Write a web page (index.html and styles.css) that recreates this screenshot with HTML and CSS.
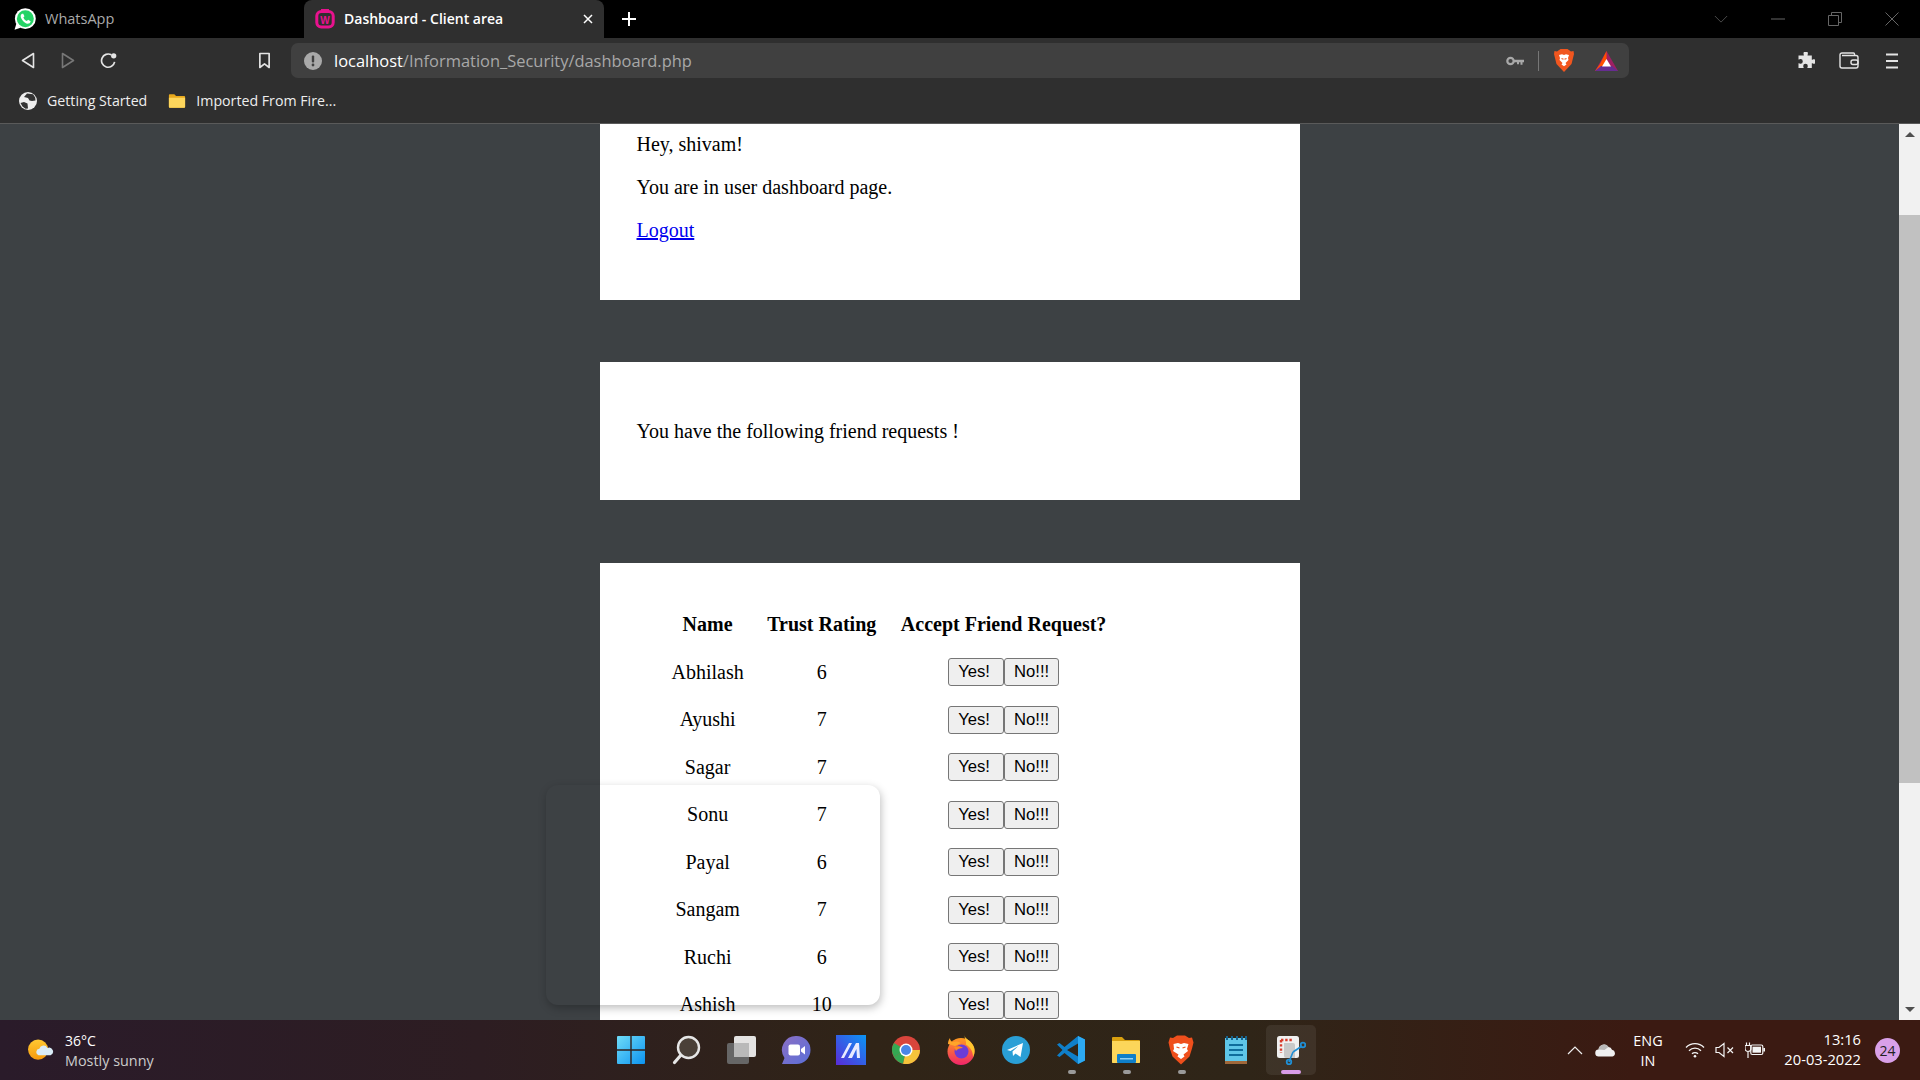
FILE: index.html
```html
<!DOCTYPE html>
<html>
<head>
    <meta charset="utf-8">
    <title>Dashboard - Client area</title>
    <link rel="stylesheet" href="styles.css">
</head>
<body>
<div class="browser">
    <div class="tabstrip">
        <div class="tab">
            <svg class="favicon favicon-wa" viewBox="0 0 20 20"><circle cx="10.300" cy="9.700" r="9.500" fill="#fff"/><path d="M.5 19.800l1.700-5.600 3.800 3.800z" fill="#fff"/><circle cx="10.300" cy="9.700" r="7.700" fill="#25d366"/><path d="M7.200 5.200c-1.500 1-1.600 3 0 5.200 1.600 2.300 3.700 4 5.800 3.800 1.300-.1 2.100-1.100 2.100-2.200l-2.300-1.300-1.100 1.100c-1.500-.5-2.700-1.800-3.200-3.200l1-1.100-1.100-2.300z" fill="#fff"/></svg>
            <span>WhatsApp</span>
        </div>
        <div class="tab tab-active">
            <svg class="favicon" viewBox="0 0 20 20"><rect x="1.800" y="2.500" width="16.400" height="15.500" rx="4.500" fill="none" stroke="#e8128e" stroke-width="3"/><rect x="6" y="0" width="8" height="4" fill="#e8128e"/><text x="10" y="14.500" text-anchor="middle" class="wamp-w">W</text></svg>
            <span>Dashboard - Client area</span>
            <svg class="tab-close" viewBox="0 0 12 12"><path d="M2 2l8 8M10 2l-8 8" stroke="#fff" stroke-width="1.500"/></svg>
        </div>
        <svg class="new-tab" viewBox="0 0 16 16"><path d="M8 1v14M1 8h14" stroke="#fff" stroke-width="2"/></svg>
        <div class="window-btns">
            <span><svg viewBox="0 0 16 10" width="14" height="9"><path d="M1 1l7 7 7-7" fill="none" stroke="#555"/></svg></span>
            <span><svg viewBox="0 0 14 2" width="14" height="2"><path d="M0 1h14" stroke="#666"/></svg></span>
            <span><svg viewBox="0 0 14 14" width="14" height="14"><path d="M.5 3.500h10v10h-10zM3.500 3.500v-3h10v10h-3" fill="none" stroke="#666"/></svg></span>
            <span><svg viewBox="0 0 14 14" width="14" height="14"><path d="M.5.5l13 13M13.500.5l-13 13" stroke="#666"/></svg></span>
        </div>
    </div>

    <div class="toolbar">
        <button class="tool"><svg viewBox="0 0 14 17" width="14" height="17"><path d="M12.500 1.500L1.500 8.500l11 7z" fill="none" stroke="#e4e4e4" stroke-width="1.600" stroke-linejoin="round"/></svg></button>
        <button class="tool"><svg viewBox="0 0 14 17" width="14" height="17"><path d="M1.500 1.500l11 7-11 7z" fill="none" stroke="#777" stroke-width="1.600" stroke-linejoin="round"/></svg></button>
        <button class="tool"><svg viewBox="0 0 18 18" width="17" height="17"><path d="M15.500 10.500A7 7 0 1 1 12 3" fill="none" stroke="#e4e4e4" stroke-width="1.800"/><circle cx="14.500" cy="4" r="2.800" fill="#e4e4e4"/></svg></button>
        <button class="tool tool-bookmark"><svg viewBox="0 0 14 18" width="13" height="17"><path d="M2 1.500h10v15l-5-3.800-5 3.800z" fill="none" stroke="#e4e4e4" stroke-width="1.800" stroke-linejoin="round"/></svg></button>
        <div class="address">
            <svg class="addr-info" viewBox="0 0 18 18"><circle cx="9" cy="9" r="9" fill="#a9a9a9"/><rect x="7.800" y="3.500" width="2.400" height="7" rx="1" fill="#404040"/><circle cx="9" cy="13" r="1.400" fill="#404040"/></svg>
            <span class="url"><b>localhost</b>/Information_Security/dashboard.php</span>
            <svg class="addr-key" viewBox="0 0 18 10"><circle cx="4.500" cy="5" r="3.200" fill="none" stroke="#a9a9a9" stroke-width="2.200"/><path d="M8 3.800h10v2.400h-1.500v2.500h-2V6.200h-1.500v2h-2V6.200H8z" fill="#a9a9a9"/></svg>
            <i class="addr-sep"></i>
            <svg class="addr-brave" viewBox="0 0 20 23"><path d="M3 2.500L6.500 0h7L17 2.500l2.500-.5.500 3-1 4-1.500 6-7.500 8-7.500-8L1 9 0 5l.5-3z" fill="#f1561f"/><path d="M5 6l3-.8 2 .8 2-.8L15 6l-1 3 .5 2-3 3 1 1.500-2.500 1.800-2.500-1.800 1-1.500-3-3L6 9z" fill="#fff"/><path d="M7.500 9.500l2 .8M12.500 9.500l-2 .8" stroke="#f1561f" stroke-width="1.200"/></svg>
            <svg class="addr-bat" viewBox="0 0 23 20"><path d="M11.500 0L23 20H0z" fill="#9e1f63"/><path d="M11.500 0L5 13l-5 7 11.500-7 z" fill="#ff5000"/><path d="M0 20l6-5h11l6 5z" fill="#662d91"/><path d="M11.500 8L16 15.500H7z" fill="#fff"/></svg>
        </div>
        <div class="tool-right">
            <button class="tool tool-wide"><svg viewBox="0 0 18 18" width="18" height="18"><path d="M6.500 1.500a2.200 2.200 0 0 1 4.400 0c0 .8-.4 1.200-.4 2.100h4.300v4.200c.9 0 1.400-.6 2-.6a2.300 2.300 0 0 1 0 4.600c-.6 0-1.100-.6-2-.6v4.800h-4.500c0-.9.500-1.400.5-2a2.300 2.300 0 0 0-4.600 0c0 .6.500 1.100.5 2H1.500v-4.800c.9 0 1.300.5 2 .5a2.300 2.300 0 0 0 0-4.600c-.7 0-1.100.5-2 .5V3.600h5.400c0-.9-.4-1.300-.4-2.100z" fill="#e4e4e4"/></svg></button>
            <button class="tool tool-wide"><svg viewBox="0 0 20 17" width="20" height="17"><path d="M15.500 3.500V2a1 1 0 0 0-1-1H3A2 2 0 0 0 1 3v11a2 2 0 0 0 2 2h14a2 2 0 0 0 2-2V5.500a2 2 0 0 0-2-2H3" fill="none" stroke="#e4e4e4" stroke-width="1.400"/><rect x="12" y="8" width="7" height="4.500" rx="2" fill="none" stroke="#e4e4e4" stroke-width="1.400"/></svg></button>
            <button class="tool tool-wide"><svg viewBox="0 0 12 16" width="12" height="16"><path d="M0 1.500h12M0 8h12M0 14.500h12" stroke="#e4e4e4" stroke-width="2"/></svg></button>
        </div>
    </div>

    <div class="bookmarks">
        <div class="bookmark">
            <svg class="bm-icon" viewBox="0 0 18 18"><circle cx="9" cy="9" r="9" fill="#eee"/><path d="M8 1.500l6 .8 2.200 3.200.3 3-3.500.5-2.500-.5-1.500-2.500L5 5zM1.500 11l3.500-1 3.500 1.500.5 5-2.500.3-3-2.300z" fill="#333"/></svg>
            <span>Getting Started</span>
        </div>
        <div class="bookmark">
            <svg class="bm-icon" viewBox="0 0 20 17"><path d="M1 2a1 1 0 0 1 1-1h5l2 2h9a1 1 0 0 1 1 1v11a1 1 0 0 1-1 1H2a1 1 0 0 1-1-1z" fill="#e8a91d"/><path d="M1 5h18v10a1 1 0 0 1-1 1H2a1 1 0 0 1-1-1z" fill="#fdd65c"/></svg>
            <span>Imported From Fire...</span>
        </div>
    </div>

    <div class="viewport">
        <main class="page">
            <section class="card card-intro">
                <p>Hey, shivam!</p>
                <p>You are in user dashboard page.</p>
                <p><a href="#">Logout</a></p>
            </section>

            <section class="card card-notice">
                <p>You have the following friend requests !</p>
            </section>

            <section class="card card-table">
                <table>
                    <tr><th>Name</th><th>Trust Rating</th><th>Accept Friend Request?</th></tr>
                    <tr><td>Abhilash</td><td>6</td><td><button>Yes!</button><button>No!!!</button></td></tr>
                    <tr><td>Ayushi</td><td>7</td><td><button>Yes!</button><button>No!!!</button></td></tr>
                    <tr><td>Sagar</td><td>7</td><td><button>Yes!</button><button>No!!!</button></td></tr>
                    <tr><td>Sonu</td><td>7</td><td><button>Yes!</button><button>No!!!</button></td></tr>
                    <tr><td>Payal</td><td>6</td><td><button>Yes!</button><button>No!!!</button></td></tr>
                    <tr><td>Sangam</td><td>7</td><td><button>Yes!</button><button>No!!!</button></td></tr>
                    <tr><td>Ruchi</td><td>6</td><td><button>Yes!</button><button>No!!!</button></td></tr>
                    <tr><td>Ashish</td><td>10</td><td><button>Yes!</button><button>No!!!</button></td></tr>
                </table>
            </section>
            <div class="ghost-panel"></div>
        </main>
        <div class="scrollbar">
            <div class="scroll-arrow"><i class="arrow-up"></i></div>
            <div class="scroll-track"><div class="scroll-thumb"></div></div>
            <div class="scroll-arrow"><i class="arrow-down"></i></div>
        </div>
    </div>

    <footer class="taskbar">
        <div class="weather">
            <svg class="weather-icon" viewBox="0 0 28 26"><defs><linearGradient id="sun" x1="0" y1="0" x2="0" y2="1"><stop offset="0" stop-color="#ffc933"/><stop offset="1" stop-color="#f59a0c"/></linearGradient></defs><circle cx="11.500" cy="12" r="10.500" fill="url(#sun)"/><path d="M12 18a3.500 3.500 0 0 1 .8-6.800 4.500 4.500 0 0 1 8.400-.8 4 4 0 0 1 3.300 7.600z" fill="#d9ecf7"/></svg>
            <div class="weather-text">
                <div class="temp">36°C</div>
                <div class="cond">Mostly sunny</div>
            </div>
        </div>

        <div class="apps">
            <div class="app"><svg viewBox="0 0 30 30"><defs><linearGradient id="win" x1="0" y1="0" x2="1" y2="1"><stop offset="0" stop-color="#6fdcf8"/><stop offset="1" stop-color="#0c93f0"/></linearGradient></defs><path d="M1 2a1 1 0 0 1 1-1h12.300v13.300H1zM15.700 1H28a1 1 0 0 1 1 1v12.300H15.700zM1 15.700h13.300V29H2a1 1 0 0 1-1-1zM15.700 15.700H29V28a1 1 0 0 1-1 1H15.700z" fill="url(#win)"/></svg></div>
            <div class="app"><svg viewBox="0 0 30 30"><circle cx="17.500" cy="12.500" r="10.500" fill="#4a4038" stroke="#e6e6e6" stroke-width="2.400"/><path d="M9.800 20.200L3.500 27.500" stroke="#e6e6e6" stroke-width="3.200" stroke-linecap="round"/></svg></div>
            <div class="app"><svg viewBox="0 0 30 30"><rect x="1" y="8" width="22" height="21" rx="2" fill="#666"/><rect x="8" y="1" width="22" height="21" rx="2" fill="#f2f2f2" opacity=".93"/><rect x="8" y="8" width="15" height="14" fill="#b9b9b9"/></svg></div>
            <div class="app"><svg viewBox="0 0 30 30"><defs><linearGradient id="chat" x1="0" y1="0" x2="1" y2="1"><stop offset="0" stop-color="#8b6fc4"/><stop offset="1" stop-color="#5a6fd8"/></linearGradient></defs><path d="M15.500 1a14 14 0 0 1 0 28H1l2.500-6A14 14 0 0 1 15.500 1z" fill="url(#chat)"/><rect x="7.500" y="9.500" width="11.500" height="11" rx="2" fill="#fff"/><path d="M20 14l4-3v8.500l-4-3z" fill="#fff"/></svg></div>
            <div class="app"><svg viewBox="0 0 30 30"><defs><linearGradient id="mm" x1="0" y1="1" x2="1" y2="0"><stop offset="0" stop-color="#5a2bd8"/><stop offset="1" stop-color="#0a96f5"/></linearGradient></defs><rect width="30" height="30" fill="url(#mm)"/><path d="M5 23L13 8h3L8 23zM12 23l8-15h3l1 15h-3l-.6-9-4.400 9z" fill="#e8eaff"/></svg></div>
            <div class="app"><svg viewBox="0 0 30 30"><circle cx="15" cy="15" r="14" fill="#d9453c"/><path d="M15 15L2.900 22A14 14 0 0 1 3 8z" fill="#34a853"/><path d="M15 15h14a14 14 0 0 1-17 13.700z" fill="#f5c33b"/><path d="M15 15L2.900 22A14 14 0 0 0 12 28.700z" fill="#34a853"/><circle cx="15" cy="15" r="6.500" fill="#fff"/><circle cx="15" cy="15" r="5" fill="#4a86e8"/></svg></div>
            <div class="app"><svg viewBox="0 0 30 30"><defs><linearGradient id="fox" x1="0" y1="0" x2="0" y2="1"><stop offset="0" stop-color="#ff9a1f"/><stop offset="1" stop-color="#f0246a"/></linearGradient></defs><circle cx="15" cy="16.500" r="13.500" fill="url(#fox)"/><path d="M18 0c1 4 8 6 10 12 1.500 4.500 0 8-1 10 0-6-3-10-7-12.500 .5-3-1-6-2-9.500z" fill="#ffc52e"/><path d="M2 9c0-2 .5-4 2-6 0 2 1 3.500 3 4 3-1 6-.5 8 1l-6 3z" fill="#ffa52a"/><circle cx="15.500" cy="16.500" r="7" fill="#6c3cd6"/><path d="M8 12c3-1.500 7-1 9 1-3 0-6 1-7 3z" fill="#ff8a1f"/></svg></div>
            <div class="app"><svg viewBox="0 0 30 30"><circle cx="15" cy="15" r="14" fill="#2a9fd6"/><path d="M6 15l16-7-2.500 14-5-3.500-2.500 2.500-.5-4.500 6-5.500-8 5z" fill="#fff"/></svg></div>
            <div class="app"><svg viewBox="0 0 30 30"><path d="M22 1l7 3.500v21L22 29V8.500L11 15l11 6.500V29L8.500 18l-5 4L1 20.500 6.500 15 1 9.500 3.500 8l5 4z" fill="#0f7fc9"/><path d="M22 1l7 3.500v21L22 29z" fill="#2daaf3"/></svg></div>
            <div class="app"><svg viewBox="0 0 30 30"><path d="M1 3a1 1 0 0 1 1-1h9l3 3h14a1 1 0 0 1 1 1v21a1 1 0 0 1-1 1H2a1 1 0 0 1-1-1z" fill="#d9a00f"/><path d="M1 6h28v21a1 1 0 0 1-1 1H2a1 1 0 0 1-1-1z" fill="#fcd65a"/><rect x="6" y="19" width="19" height="9" rx="1" fill="#0f7fc9"/><rect x="9" y="23" width="13" height="1.500" fill="#8fd0f5"/></svg></div>
            <div class="app"><svg viewBox="0 0 26 30"><path d="M5 3l4-2.500h8L21 3l3-.5 1.500 5-1.500 6-2.500 8-8.500 8-8.500-8L2 14 .5 7.500 2 2.500z" fill="#ef4f1c"/><path d="M5.500 9l4.500-1 3 1 3-1 4.500 1-1.500 5 1 2-4.500 3.500 1 2-3.500 2.500-3.500-2.500 1-2L5 16l1-2z" fill="#fff"/><path d="M8.500 12l3 1M17.500 12l-3 1" stroke="#ef4f1c" stroke-width="1.300"/></svg></div>
            <div class="app"><svg viewBox="0 0 26 30"><rect x="2" y="3" width="22" height="26" fill="#5ec6e8"/><rect x="2" y="26" width="22" height="3" fill="#a0683a"/><path d="M4 1v4M9 1v4M14 1v4M19 1v4M23 1v4" stroke="#17638e" stroke-width="2"/><path d="M6 10h14M6 15h14M6 20h14" stroke="#0e6d9c" stroke-width="2.200"/></svg></div>
            <div class="app app-active"><svg viewBox="0 0 30 30"><rect x="1" y="1" width="22" height="22" rx="2.500" fill="#f0f0f0"/><path d="M5 5h12M5 5v13" stroke="#d83b2b" stroke-width="2.400" stroke-dasharray="2.400 1.800"/><path d="M8 8h9a2 2 0 0 1 2 2v13H10a2 2 0 0 1-2-2z" fill="#c9c9c9"/><path d="M17 17l-4 10M17 17l9-6" stroke="#1f8fd6" stroke-width="1.600"/><circle cx="27" cy="10" r="2.300" fill="none" stroke="#1f8fd6" stroke-width="1.800"/><circle cx="13" cy="27" r="2.300" fill="none" stroke="#1f8fd6" stroke-width="1.800"/></svg></div>
        </div>

        <div class="tray">
            <svg class="tray-chevron" viewBox="0 0 16 9"><path d="M1 8l7-7 7 7" fill="none" stroke="#eee" stroke-width="1.200"/></svg>
            <svg class="tray-cloud" viewBox="0 0 21 14"><path d="M4 13.500a3.500 3.500 0 0 1-.5-7 5.500 5.500 0 0 1 10-2.500 4 4 0 0 1 3.500 2.700 3.500 3.500 0 0 1 .5 6.800z" fill="#f0f0f0"/><path d="M3.500 6.500a5.500 5.500 0 0 1 10-2.500l-4 3z" fill="#b9b9b9"/></svg>
            <div class="lang">ENG<br>IN</div>
            <svg class="tray-wifi" viewBox="0 0 20 16"><path d="M1 5.500a12.500 12.500 0 0 1 18 0M4 8.700a8.500 8.500 0 0 1 12 0M7 11.800a4.200 4.200 0 0 1 6 0" fill="none" stroke="#f4f4f4" stroke-width="1.300"/><circle cx="10" cy="14.300" r="1.300" fill="#f4f4f4"/></svg>
            <svg class="tray-sound" viewBox="0 0 20 16"><path d="M1 5.500h3L9 1.500v13l-5-4H1z" fill="none" stroke="#f4f4f4" stroke-width="1.200"/><path d="M12.500 5.500l5.500 5.500M18 5.500L12.500 11" stroke="#f4f4f4" stroke-width="1.200"/></svg>
            <svg class="tray-battery" viewBox="0 0 20 16"><path d="M1.500.5v2.500M4.500.5v2.500M0 3.500h6v3a3 3 0 0 1-6 0zM3 9.500V16" fill="none" stroke="#f4f4f4" stroke-width="1.200"/><rect x="5.800" y="3" width="12" height="9.500" rx="1.500" fill="none" stroke="#f4f4f4" stroke-width="1.200"/><rect x="7.500" y="4.700" width="8.500" height="6" fill="#f4f4f4"/><rect x="18.300" y="6" width="1.700" height="3.500" fill="#f4f4f4"/></svg>
            <div class="clock">13:16<br>20-03-2022</div>
            <div class="badge">24</div>
        </div>
    </footer>
</div>
</body>
</html>
```

FILE: styles.css
```css
* {
    box-sizing: border-box;
}
html, body {
    margin: 0;
    height: 100%;
    overflow: hidden;
}
body {
    font-family: "Liberation Serif", serif;
    font-size: 20px;
    color: #000;
}
svg {
    display: block;
    flex: none;
}
.browser {
    display: flex;
    flex-direction: column;
    height: 100vh;
}

/* tabs */
.tabstrip {
    display: flex;
    align-items: stretch;
    height: 38px;
    background: #000;
    font-family: "Open Sans", sans-serif;
    font-size: 14.5px;
    color: #aaa;
}
.tab {
    display: flex;
    align-items: center;
    gap: 9px;
    width: 304px;
    padding-left: 14px;
}
.tab span {
    margin-bottom: 2px;
}
.tab-active {
    width: 300px;
    padding-left: 11px;
    background: #2f2f2f;
    border-radius: 8px 8px 0 0;
    color: #fff;
    font-size: 14px;
    font-weight: 600;
}
.favicon {
    width: 20px;
    height: 20px;
}
.favicon-wa {
    width: 22px;
    height: 22px;
}
.wamp-w {
    font-family: "Liberation Sans", sans-serif;
    font-size: 10px;
    font-weight: 700;
    fill: #e8128e;
}
.tab-close {
    width: 12px;
    height: 12px;
    margin-left: auto;
    margin-right: 10px;
}
.new-tab {
    width: 16px;
    height: 16px;
    margin: 11px 0 0 17px;
}
.window-btns {
    display: flex;
    margin-left: auto;
}
.window-btns span {
    display: flex;
    align-items: center;
    justify-content: center;
    width: 57px;
}

/* toolbar */
.toolbar {
    display: flex;
    align-items: center;
    height: 45px;
    padding: 5px 7px 5px 8px;
    background: #2f2f2f;
}
.tool {
    display: flex;
    align-items: center;
    justify-content: center;
    width: 40px;
    height: 35px;
    padding: 0;
    border: 0;
    background: none;
}
.tool-bookmark {
    margin-left: 116px;
    margin-right: 7px;
}
.tool-wide {
    width: 43px;
}
.tool-right {
    display: flex;
    margin-left: auto;
}
.address {
    display: flex;
    align-items: center;
    width: 1338px;
    height: 35px;
    padding-left: 13px;
    background: #404040;
    border-radius: 7px;
    font-family: "Open Sans", sans-serif;
    font-size: 16.45px;
    color: #a8a8a8;
}
.addr-info {
    width: 18px;
    height: 18px;
    margin-right: 12px;
}
.url {
    margin-bottom: 1px;
}
.url b {
    font-weight: 400;
    color: #fff;
}
.addr-key {
    width: 18px;
    height: 10px;
    margin-left: auto;
}
.addr-sep {
    width: 1px;
    height: 20px;
    margin: 0 15px 0 14px;
    background: #777;
}
.addr-brave {
    width: 20px;
    height: 23px;
}
.addr-bat {
    width: 23px;
    height: 20px;
    margin: 0 11px 0 21px;
}

/* bookmarks */
.bookmarks {
    display: flex;
    align-items: center;
    gap: 21px;
    height: 41px;
    padding: 0 0 4px 19px;
    background: #2f2f2f;
    border-bottom: 1px solid #5a5a5a;
    font-family: "Open Sans", sans-serif;
    font-size: 14.2px;
    color: #eee;
}
.bookmark {
    display: flex;
    align-items: center;
    gap: 10px;
}
.bookmark span {
    margin-bottom: 2px;
}
.bm-icon {
    width: 18px;
    height: 18px;
}

/* page */
.viewport {
    display: flex;
    flex: 1;
    min-height: 0;
    background: #3d4144;
}
.page {
    position: relative;
    flex: 1;
    overflow: hidden;
}
.card {
    width: 700px;
    margin: 0 auto;
    padding: 0 37px;
    background: #fff;
}
.card p {
    margin: 0 0 20px;
    line-height: 23px;
}
.card-intro {
    height: 176px;
    padding-top: 9px;
    margin-bottom: 62px;
}
.card-notice {
    height: 138px;
    padding-top: 58px;
    margin-bottom: 63px;
}
.card-table {
    height: 520px;
    padding-top: 38px;
}
table {
    margin-left: 24px;
    border-collapse: collapse;
}
th, td {
    height: 47.5px;
    padding: 0 11px;
    text-align: center;
    vertical-align: middle;
}
th:first-child, td:first-child {
    padding-right: 12px;
}
th:nth-child(2), td:nth-child(2) {
    padding-left: 11.5px;
}
th:nth-child(3), td:nth-child(3) {
    padding: 0 15px 0 13.5px;
}
button {
    height: 28px;
    padding: 0 8px;
    font-family: "Liberation Sans", sans-serif;
    font-size: 16.67px;
    color: #000;
    background: #efefef;
    border: 1.25px solid #767676;
    border-radius: 3px;
}
td button {
    vertical-align: middle;
}
td button:first-child {
    width: 56px;
    padding-right: 12px;
}
td button:last-child {
    width: 55px;
}
.ghost-panel {
    position: absolute;
    left: 546px;
    top: 661px;
    width: 334px;
    height: 220px;
    border-radius: 12px;
    box-shadow: 1px 3px 8px rgba(0, 0, 0, .26);
}
.scrollbar {
    display: flex;
    flex-direction: column;
    width: 21px;
    background: #f1f1f1;
}
.scroll-arrow {
    display: flex;
    align-items: center;
    justify-content: center;
    height: 21px;
}
.arrow-up, .arrow-down {
    width: 0;
    height: 0;
    border-left: 5px solid transparent;
    border-right: 5px solid transparent;
}
.arrow-up {
    border-bottom: 5px solid #505050;
}
.arrow-down {
    border-top: 5px solid #505050;
}
.scroll-track {
    flex: 1;
    padding-top: 70px;
}
.scroll-thumb {
    height: 568px;
    background: #c1c1c1;
}

/* taskbar */
.taskbar {
    display: grid;
    grid-template-columns: 1fr auto 1fr;
    align-items: center;
    height: 60px;
    background: linear-gradient(90deg, #2a1b2a 0%, #2d1d22 25%, #302417 45%, #2f2518 65%, #3b1a12 85%, #3b1a12 100%);
    font-family: "Open Sans", sans-serif;
    color: #fff;
}
.weather {
    display: flex;
    align-items: center;
    padding-left: 27px;
}
.weather-icon {
    width: 27px;
    height: 25px;
    margin-right: 11px;
}
.temp {
    padding-top: 1px;
    font-size: 14px;
    line-height: 20px;
}
.cond {
    font-size: 14.4px;
    line-height: 20px;
    color: #ccc;
}
.apps {
    display: flex;
    padding-left: 2px;
}
.app {
    position: relative;
    display: flex;
    align-items: center;
    justify-content: center;
    width: 55px;
    height: 50px;
}
.app svg {
    width: 30px;
    height: 30px;
}
.app:nth-child(9)::after,
.app:nth-child(10)::after,
.app:nth-child(11)::after {
    content: "";
    position: absolute;
    left: 24px;
    bottom: 1px;
    width: 8px;
    height: 4px;
    border-radius: 2px;
    background: #9a9a9a;
}
.app-active {
    width: 50px;
    margin: 0 2.5px;
    background: rgba(255, 255, 255, .07);
    border-radius: 5px;
}
.app-active::after {
    content: "";
    position: absolute;
    left: 15px;
    bottom: 1px;
    width: 20px;
    height: 4px;
    border-radius: 2px;
    background: #d99ce8;
}
.tray {
    display: flex;
    align-items: center;
    justify-content: flex-end;
    padding-right: 20px;
}
.tray-chevron {
    width: 16px;
    height: 9px;
    margin-right: 11.500px;
}
.tray-cloud {
    width: 21px;
    height: 14px;
    margin-right: 14.500px;
}
.lang {
    width: 36px;
    margin-top: 2px;
    margin-right: 19px;
    font-size: 14.4px;
    line-height: 20px;
    text-align: center;
}
.tray-wifi {
    width: 20px;
    height: 16px;
    margin-right: 10px;
}
.tray-sound {
    width: 20px;
    height: 16px;
    margin-right: 10px;
}
.tray-battery {
    width: 20px;
    height: 16px;
}
.clock {
    width: 96px;
    margin-bottom: 2px;
    font-size: 14.7px;
    line-height: 20px;
    text-align: right;
}
.badge {
    width: 25px;
    height: 25px;
    margin-left: 14px;
    border-radius: 50%;
    background: #d9a0e8;
    color: #222;
    font-size: 14px;
    line-height: 25px;
    text-align: center;
}
```
